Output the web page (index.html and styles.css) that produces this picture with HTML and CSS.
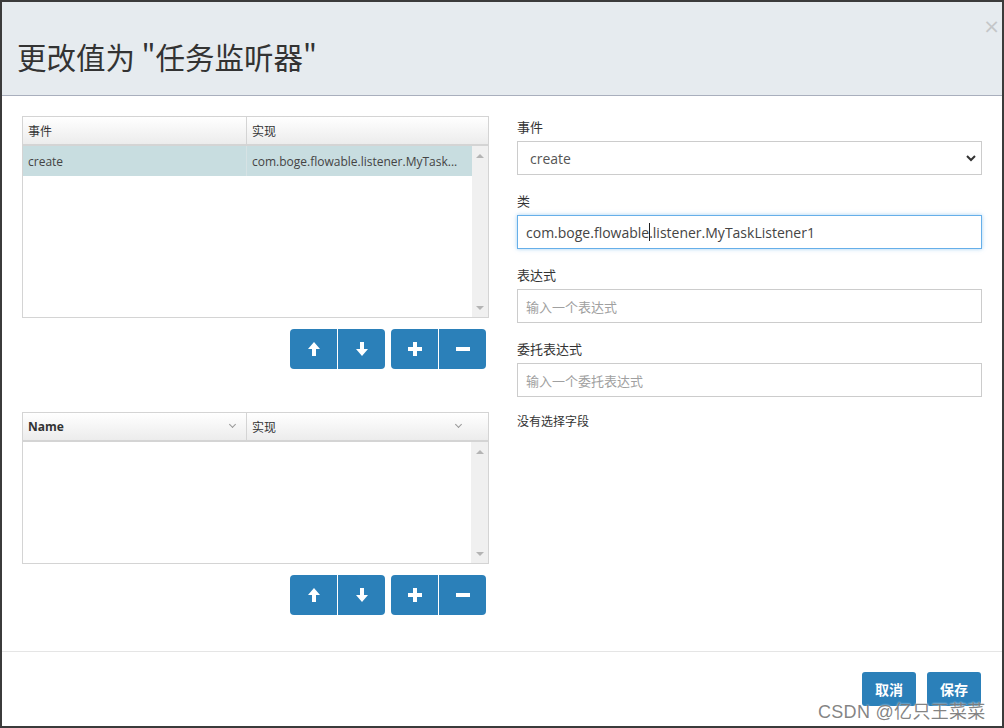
FILE: index.html
```html
<!DOCTYPE html>
<html lang="zh">
<head>
<meta charset="utf-8">
<title>任务监听器</title>
<link rel="stylesheet" href="styles.css">
</head>
<body>
<div class="dialog">
  <div class="modal-header">
    <h2 class="modal-title">更改值为 "任务监听器"</h2>
    <span class="close">×</span>
  </div>
  <div class="modal-body">
    <div class="col-left">
      <div class="grid grid-top">
        <div class="grid-head">
          <div class="hcell c1">事件</div>
          <div class="hcell c2">实现</div>
          <div class="hpad"></div>
        </div>
        <div class="grid-body">
          <div class="rows">
            <div class="row selected">
              <div class="cell c1">create</div>
              <div class="cell c2">com.boge.flowable.listener.MyTask...</div>
            </div>
          </div>
          <div class="scrollbar"><span class="arr up"></span><span class="arr down"></span></div>
        </div>
      </div>
      <div class="toolbar">
        <div class="btn-group">
          <button class="btn-icon"><svg width="14" height="16" viewBox="0 0 14 16"><path d="M7 1 L13 8 H9 V15 H5 V8 H1 Z" fill="#fff"/></svg></button>
          <button class="btn-icon"><svg width="14" height="16" viewBox="0 0 14 16"><path d="M7 15 L13 8 H9 V1 H5 V8 H1 Z" fill="#fff"/></svg></button>
        </div>
        <div class="btn-group">
          <button class="btn-icon"><svg width="14" height="14" viewBox="0 0 14 14"><path d="M5 0 H9 V5 H14 V9 H9 V14 H5 V9 H0 V5 H5 Z" fill="#fff"/></svg></button>
          <button class="btn-icon"><svg width="14" height="14" viewBox="0 0 14 14"><rect x="0" y="5" width="14" height="4" fill="#fff"/></svg></button>
        </div>
      </div>

      <div class="grid grid-bottom">
        <div class="grid-head">
          <div class="hcell c1 bold">Name<span class="sort"></span></div>
          <div class="hcell c2">实现<span class="sort"></span></div>
          <div class="hpad"></div>
        </div>
        <div class="grid-body">
          <div class="rows"></div>
          <div class="scrollbar"><span class="arr up"></span><span class="arr down"></span></div>
        </div>
      </div>
      <div class="toolbar">
        <div class="btn-group">
          <button class="btn-icon"><svg width="14" height="16" viewBox="0 0 14 16"><path d="M7 1 L13 8 H9 V15 H5 V8 H1 Z" fill="#fff"/></svg></button>
          <button class="btn-icon"><svg width="14" height="16" viewBox="0 0 14 16"><path d="M7 15 L13 8 H9 V1 H5 V8 H1 Z" fill="#fff"/></svg></button>
        </div>
        <div class="btn-group">
          <button class="btn-icon"><svg width="14" height="14" viewBox="0 0 14 14"><path d="M5 0 H9 V5 H14 V9 H9 V14 H5 V9 H0 V5 H5 Z" fill="#fff"/></svg></button>
          <button class="btn-icon"><svg width="14" height="14" viewBox="0 0 14 14"><rect x="0" y="5" width="14" height="4" fill="#fff"/></svg></button>
        </div>
      </div>
    </div>

    <div class="col-right">
      <div class="form-group">
        <label class="label">事件</label>
        <div class="select">
          <span>create</span>
          <svg width="10" height="7" viewBox="0 0 10 7"><path d="M1 1 L5 5 L9 1" fill="none" stroke="#333" stroke-width="2"/></svg>
        </div>
      </div>
      <div class="form-group">
        <label class="label">类</label>
        <div class="input focused">com.boge.flowable<span class="caret"></span>.listener.MyTaskListener1</div>
      </div>
      <div class="form-group">
        <label class="label">表达式</label>
        <div class="input placeholder">输入一个表达式</div>
      </div>
      <div class="form-group">
        <label class="label">委托表达式</label>
        <div class="input placeholder">输入一个委托表达式</div>
      </div>
      <div class="note">没有选择字段</div>
    </div>
  </div>
  <div class="modal-footer">
    <button class="btn-primary">取消</button>
    <button class="btn-primary">保存</button>
  </div>
  <div class="watermark">CSDN @亿只王菜菜</div>
</div>
</body>
</html>
```
FILE: styles.css
```css
* { box-sizing: border-box; }
html, body { margin: 0; padding: 0; }
body {
  background: #3b3b3b;
  width: 1004px;
  height: 728px;
  padding: 2px;
  font-family: "Open Sans", "Noto Sans CJK SC", sans-serif;
  color: #333;
}
.dialog {
  position: relative;
  width: 1000px;
  height: 724px;
  background: #fff;
  display: flex;
  flex-direction: column;
  overflow: hidden;
}
.modal-header {
  position: relative;
  height: 94px;
  background: #e6ebef;
  border-bottom: 1px solid #a9afbd;
  padding: 0 15px;
  display: flex;
  align-items: center;
}
.modal-title {
  margin: 14px 0 0 0;
  font-family: "Noto Sans CJK SC", sans-serif;
  font-size: 29.5px;
  font-weight: 400;
  color: #333;
  letter-spacing: 0;
}
.close {
  position: absolute;
  right: 2px;
  top: 14px;
  font-family: "DejaVu Sans", sans-serif;
  font-size: 20px;
  color: #c4c6c8;
  line-height: 1;
}
.modal-body {
  height: 556px;
  padding: 20px 20px 0 20px;
  display: flex;
  gap: 28px;
  border-bottom: 1px solid #e5e5e5;
}
.col-left { width: 467px; display: flex; flex-direction: column; }
.col-right { width: 465px; display: flex; flex-direction: column; }

.grid {
  border: 1px solid #d4d4d4;
  display: flex;
  flex-direction: column;
  font-family: "Open Sans", "Noto Sans CJK SC", sans-serif;
  font-size: 12px;
}
.grid-top { height: 202px; }
.grid-bottom { height: 152px; margin-top: 43px; }
.grid-head {
  height: 29px;
  display: flex;
  background: linear-gradient(#ffffff, #ececec);
  border-bottom: 2px solid #d4d4d4;
}
.hcell {
  position: relative;
  display: flex;
  align-items: center;
  padding-left: 5px;
  font-family: "Noto Sans CJK SC", sans-serif;
  font-size: 12px;
  color: #333;
}
.hcell.bold { font-family: "Open Sans", sans-serif; font-weight: 700; font-size: 12px; }
.c1 { width: 224px; border-right: 1px solid #d4d4d4; }
.c2 { width: 225px; }
.hpad { flex: 1; }
.sort {
  position: absolute;
  right: 11px;
  top: 9px;
  width: 5px;
  height: 5px;
  border-right: 1px solid #999;
  border-bottom: 1px solid #999;
  transform: rotate(45deg);
}
.grid-body { flex: 1; display: flex; }
.rows { flex: 1; }
.row { height: 30px; display: flex; }
.row.selected { background: #c8dde0; }
.cell {
  display: flex;
  align-items: center;
  padding-left: 5px;
  color: #444;
  font-size: 12px;
  white-space: nowrap;
  overflow: hidden;
}
.row .c1 { border-right: 1px solid #d6e2e4; }
.scrollbar {
  width: 17px;
  background: #f0f0f0;
  display: flex;
  flex-direction: column;
  justify-content: space-between;
  align-items: center;
  padding: 8px 0 7px;
}
.arr { width: 0; height: 0; border-left: 4px solid transparent; border-right: 4px solid transparent; }
.arr.up { border-bottom: 4px solid #b4b4b4; }
.arr.down { border-top: 4px solid #b4b4b4; }

.toolbar {
  display: flex;
  justify-content: flex-end;
  gap: 6px;
  margin-top: 11px;
  padding-right: 3px;
}
.btn-group { display: flex; gap: 1px; }
.btn-icon {
  width: 47px;
  height: 40px;
  border: 0;
  background: #2b80b9;
  display: flex;
  align-items: center;
  justify-content: center;
  padding: 0;
}
.btn-group .btn-icon:first-child { border-radius: 4px 0 0 4px; }
.btn-group .btn-icon:last-child { border-radius: 0 4px 4px 0; }

.form-group { display: flex; flex-direction: column; margin-bottom: 15px; }
.label {
  font-family: "Noto Sans CJK SC", sans-serif;
  font-size: 13px;
  color: #333;
  height: 19px;
  line-height: 19px;
  margin-top: 1px;
  margin-bottom: 5px;
}
.select, .input {
  height: 34px;
  border: 1px solid #ccc;
  display: flex;
  align-items: center;
  font-size: 14px;
  color: #555;
  white-space: nowrap;
}
.select { justify-content: space-between; padding: 0 5px 0 12px; }
.input { padding: 0 8px; }
.input.focused {
  border-color: #66afe9;
  box-shadow: 0 0 4px rgba(102,175,233,0.6);
  font-size: 14px;
  color: #444;
}
.caret { display: inline-block; width: 1px; height: 18px; background: #222; margin: 0 -1px 0 0; }
.input.placeholder {
  font-family: "Noto Sans CJK SC", sans-serif;
  font-size: 13px;
  color: #a0a0a0;
}
.note {
  font-family: "Noto Sans CJK SC", sans-serif;
  font-size: 12px;
  color: #333;
  margin-top: 0;
}
.modal-footer {
  flex: 1;
  display: flex;
  justify-content: flex-end;
  align-items: flex-start;
  gap: 11px;
  padding: 20px 21px 0 0;
}
.btn-primary {
  width: 54px;
  height: 34px;
  border: 0;
  border-radius: 3px;
  background: #2b80b9;
  color: #fff;
  font-family: "Noto Sans CJK SC", sans-serif;
  font-weight: 700;
  font-size: 14px;
  padding: 0;
}
.watermark {
  position: absolute;
  left: 816px;
  top: 695px;
  font-family: "Liberation Sans", "Noto Sans CJK SC", sans-serif;
  font-size: 18px;
  color: rgba(110,110,110,0.85);
  text-shadow: 0 0 2px #fff;
  letter-spacing: 0.3px;
}
```
